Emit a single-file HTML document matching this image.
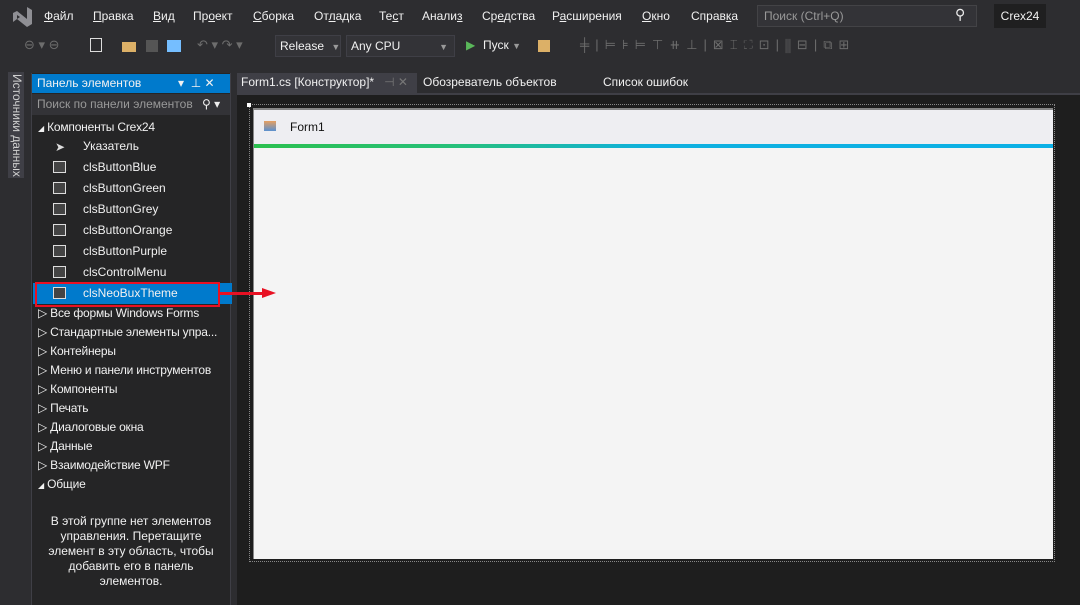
<!DOCTYPE html>
<html><head><meta charset="utf-8"><style>
*{margin:0;padding:0;box-sizing:border-box}
body{width:1080px;height:605px;background:#2d2d30;font-family:"Liberation Sans","DejaVu Sans",sans-serif;font-size:12px;color:#f1f1f1;position:relative;overflow:hidden}
.a{position:absolute;white-space:nowrap}
.menu span{position:absolute;top:9px}
u{text-decoration:underline}
.tb{color:#6d6d6d;font-size:13px}
.item{position:absolute;left:83px;height:21px;line-height:21px}
.ico{position:absolute;left:53px;width:13px;height:12px}
.grp{position:absolute;left:38px;height:19px;line-height:19px;letter-spacing:-0.2px}
</style></head><body>
<svg class="a" style="left:11px;top:7px" width="22" height="20" viewBox="0 0 22 20"><path d="M2 6 L6 4 L16 12 L16 0 L21 3 L21 17 L16 20 L6 12 L2 15 Z M6 8 L6 12 L9 10 Z" fill="#8f8f94"/></svg>
<div class="menu">
<span style="left:44px"><u>Ф</u>айл</span><span style="left:93px"><u>П</u>равка</span><span style="left:153px"><u>В</u>ид</span><span style="left:193px">Пр<u>о</u>ект</span><span style="left:253px"><u>С</u>борка</span><span style="left:314px">От<u>л</u>адка</span><span style="left:379px">Те<u>с</u>т</span><span style="left:422px">Анали<u>з</u></span><span style="left:482px">Ср<u>е</u>дства</span><span style="left:552px">Р<u>а</u>сширения</span><span style="left:642px"><u>О</u>кно</span><span style="left:691px">Справ<u>к</u>а</span>
</div>
<div class="a" style="left:757px;top:5px;width:220px;height:22px;background:#333337;border:1px solid #434346;color:#999;padding:3px 6px">Поиск (Ctrl+Q)</div>
<div class="a" style="left:955px;top:6px;color:#eee;font-size:14px">⚲</div>
<div class="a" style="left:994px;top:4px;width:52px;height:24px;background:#1f1f20;text-align:center;line-height:24px">Crex24</div>
<div class="a tb" style="left:24px;top:37px">⊖ ▾ ⊖</div>
<div class="a" style="left:90px;top:38px;width:12px;height:14px;border:1px solid #ddd"></div>
<div class="a" style="left:122px;top:42px;width:14px;height:10px;background:#dcb067"></div>
<div class="a" style="left:146px;top:40px;width:12px;height:12px;background:#555"></div>
<div class="a" style="left:167px;top:40px;width:14px;height:12px;background:#75beff"></div>
<div class="a tb" style="left:197px;top:37px">↶ ▾ ↷ ▾</div>
<div class="a" style="left:275px;top:35px;width:66px;height:22px;border:1px solid #3f3f46;background:#333337;padding:3px 4px">Release <span style="color:#999;margin-left:4px;font-size:9px">▼</span></div>
<div class="a" style="left:346px;top:35px;width:109px;height:22px;border:1px solid #3f3f46;background:#333337;padding:3px 4px">Any CPU<span style="position:absolute;right:6px;color:#999;font-size:9px;top:6px">▼</span></div>
<div class="a" style="left:466px;top:38px;color:#5ab75a">▶</div>
<div class="a" style="left:483px;top:38px">Пуск <span style="color:#999;font-size:9px">▼</span></div>
<div class="a" style="left:538px;top:40px;width:12px;height:12px;background:#dcb067"></div>
<div class="a tb" style="left:580px;top:37px;letter-spacing:6px">╪|⊨⊧⊨⊤⧺⊥|⊠⌶⛶⊡|⫼⊟|⧉⊞</div>
<div class="a" style="left:8px;top:72px;width:16px;height:106px;background:#3f3f46"></div>
<div class="a" style="left:10px;top:74px;writing-mode:vertical-rl;color:#d0d0d0">Источники данных</div>
<div class="a" style="left:31px;top:73px;width:200px;height:532px;background:#252526;border-left:1px solid #3f3f46;border-right:1px solid #3f3f46"></div>
<div class="a" style="left:32px;top:74px;width:198px;height:19px;background:#007acc;padding:2px 5px">Панель элементов<span style="position:absolute;left:146px;top:2px">▾ &nbsp;⊥ ✕</span></div>
<div class="a" style="left:32px;top:94px;width:198px;height:21px;background:#333337;color:#999;padding:3px 5px">Поиск по панели элементов<span style="position:absolute;left:170px;color:#eee">⚲ ▾</span></div>
<div class="grp" style="top:118px"><span style="font-size:8px">◢</span> Компоненты Crex24</div>
<div class="a" style="left:55px;top:140px;color:#ddd">➤</div>
<div class="item" style="top:136px">Указатель</div>
<div class="a" style="left:33px;top:283px;width:199px;height:21px;background:#007acc"></div>
<div class="a" style="left:35px;top:282px;width:185px;height:25px;border:2px solid #e81123"></div>
<div class="item" style="top:157px">clsButtonBlue</div>
<div class="item" style="top:178px">clsButtonGreen</div>
<div class="item" style="top:199px">clsButtonGrey</div>
<div class="item" style="top:220px">clsButtonOrange</div>
<div class="item" style="top:241px">clsButtonPurple</div>
<div class="item" style="top:262px">clsControlMenu</div>
<div class="item" style="top:283px">clsNeoBuxTheme</div>
<div class="ico" style="top:161px;border:1px solid #ddd;background:#444"></div>
<div class="ico" style="top:182px;border:1px solid #ddd;background:#444"></div>
<div class="ico" style="top:203px;border:1px solid #ddd;background:#444"></div>
<div class="ico" style="top:224px;border:1px solid #ddd;background:#444"></div>
<div class="ico" style="top:245px;border:1px solid #ddd;background:#444"></div>
<div class="ico" style="top:266px;border:1px solid #ddd;background:#444"></div>
<div class="ico" style="top:287px;border:1px solid #ddd;background:#444"></div>
<div class="grp" style="top:304px">▷ Все формы Windows Forms</div>
<div class="grp" style="top:323px">▷ Стандартные элементы упра...</div>
<div class="grp" style="top:342px">▷ Контейнеры</div>
<div class="grp" style="top:361px">▷ Меню и панели инструментов</div>
<div class="grp" style="top:380px">▷ Компоненты</div>
<div class="grp" style="top:399px">▷ Печать</div>
<div class="grp" style="top:418px">▷ Диалоговые окна</div>
<div class="grp" style="top:437px">▷ Данные</div>
<div class="grp" style="top:456px">▷ Взаимодействие WPF</div>
<div class="grp" style="top:475px"><span style="font-size:8px">◢</span> Общие</div>
<div class="a" style="left:46px;top:514px;width:170px;text-align:center;white-space:normal;line-height:15px">В этой группе нет элементов управления. Перетащите элемент в эту область, чтобы добавить его в панель элементов.</div>
<div class="a" style="left:237px;top:73px;width:180px;height:20px;background:#3f3f46;padding:2px 4px">Form1.cs [Конструктор]*<span style="color:#777;margin-left:10px">⊣ ✕</span></div>
<div class="a" style="left:423px;top:75px">Обозреватель объектов</div>
<div class="a" style="left:603px;top:75px">Список ошибок</div>
<div class="a" style="left:237px;top:93px;width:843px;height:512px;background:#1e1e1e;border-top:2px solid #3f3f46"></div>
<div class="a" style="left:249px;top:104px;width:806px;height:458px;border:1px dotted #888"></div>
<div class="a" style="left:247px;top:103px;width:4px;height:4px;background:#fff"></div>
<div class="a" style="left:253px;top:108px;width:800px;height:451px;background:#f4f4f4;border-top:2px solid #888;border-left:1px solid #888"></div>
<div class="a" style="left:254px;top:110px;width:799px;height:34px;background:#eeeef2"></div>
<div class="a" style="left:254px;top:144px;width:799px;height:4px;background:linear-gradient(90deg,#2bc04f 0%,#26c07a 25%,#0fb0e0 50%,#0bb0e6 100%)"></div>
<div class="a" style="left:264px;top:121px;width:12px;height:10px;background:linear-gradient(#e8a060,#5a90d0)"></div>
<div class="a" style="left:290px;top:120px;color:#111">Form1</div>
<div class="a" style="left:220px;top:292px;width:46px;height:3px;background:#e81123"></div>
<div class="a" style="left:262px;top:288px;width:0;height:0;border-left:14px solid #e81123;border-top:5px solid transparent;border-bottom:5px solid transparent"></div>
</body></html>
